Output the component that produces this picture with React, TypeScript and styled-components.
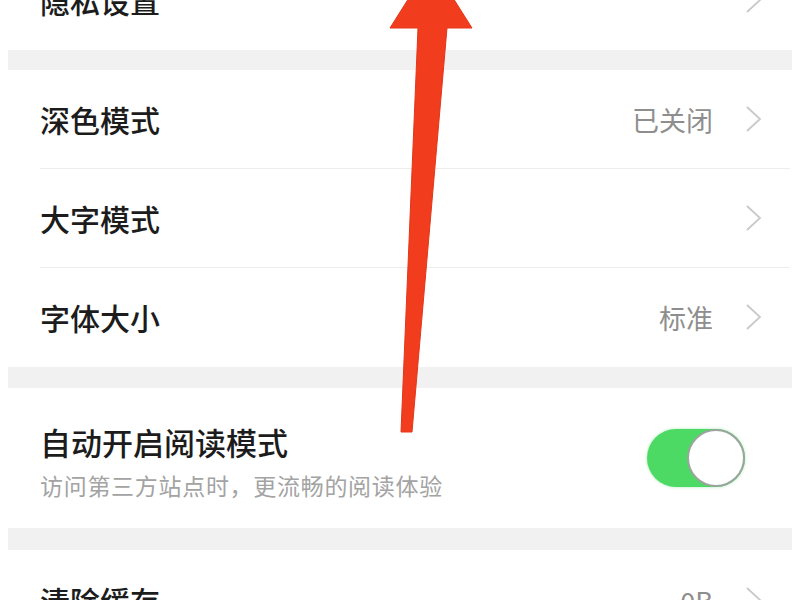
import { FC } from "react";
import styled, { createGlobalStyle } from "styled-components";

const GlobalStyle = createGlobalStyle`
  html, body {
    margin: 0;
    padding: 0;
    background: #fff;
  }
  body {
    font-family: "Noto Sans CJK SC", "Noto Sans", sans-serif;
  }
`;

const Page = styled.div`
  position: relative;
  width: 800px;
  height: 600px;
  overflow: hidden;
  background: #fff;
`;

const List = styled.div`
  display: flex;
  flex-direction: column;
  margin-top: -50px;
`;

const Row = styled.div<{ $h?: number; $pr?: number }>`
  display: flex;
  align-items: center;
  justify-content: space-between;
  height: ${(p) => p.$h ?? 98}px;
  padding: 0 ${(p) => p.$pr ?? 38}px 0 40px;
  flex-shrink: 0;
`;

const Divider = styled.div<{ $blank?: boolean }>`
  height: 1px;
  margin: 0 10px 0 40px;
  background: ${(p) => (p.$blank ? "transparent" : "#ededed")};
  flex-shrink: 0;
`;

const Band = styled.div<{ $h?: number }>`
  height: ${(p) => p.$h ?? 21}px;
  margin: 0 8px;
  background: #f1f1f1;
  flex-shrink: 0;
`;

const Title = styled.div<{ $size?: number }>`
  font-size: ${(p) => p.$size ?? 30}px;
  line-height: 36px;
  color: #1c1c1c;
  font-weight: 500;
`;

const Sub = styled.div`
  font-size: 23px;
  letter-spacing: 0.7px;
  line-height: 30px;
  color: #a3a3a3;
  margin-top: 10px;
`;

const TextBlock = styled.div`
  display: flex;
  flex-direction: column;
  margin-top: 8px;
`;

const Right = styled.div`
  display: flex;
  align-items: center;
  gap: 32px;
`;

const Value = styled.span`
  font-size: 27px;
  color: #8e8e8e;
`;

const Chevron = styled.svg`
  width: 17px;
  height: 28px;
  display: block;
`;

const Toggle = styled.div<{ $on: boolean }>`
  position: relative;
  width: 98px;
  height: 58px;
  border-radius: 29px;
  background: ${(p) => (p.$on ? "#4cd964" : "#e5e5e5")};
  box-shadow: 0 0 3px rgba(76, 217, 100, 0.5);
`;

const Knob = styled.div<{ $on: boolean }>`
  position: absolute;
  top: 0;
  ${(p) => (p.$on ? "right: 0;" : "left: 0;")}
  width: 58px;
  height: 58px;
  box-sizing: border-box;
  border-radius: 50%;
  background: #fff;
  border: 2px solid #9aa59d;
`;

const ArrowLayer = styled.svg`
  position: absolute;
  top: 0;
  left: 0;
  width: 800px;
  height: 600px;
  pointer-events: none;
`;

const ChevronIcon: FC = () => (
  <Chevron viewBox="0 0 17 28">
    <path d="M2 2 L15 14 L2 26" fill="none" stroke="#c9c9c9" strokeWidth="1.8" />
  </Chevron>
);

type Item = { title: string; value?: string };

const NavRow: FC<Item & { h?: number }> = ({ title, value, h }) => (
  <Row $h={h}>
    <Title>{title}</Title>
    <Right>
      {value && <Value>{value}</Value>}
      <ChevronIcon />
    </Right>
  </Row>
);

const displayItems: Item[] = [
  { title: "深色模式", value: "已关闭" },
  { title: "大字模式" },
  { title: "字体大小", value: "标准" },
];

const App: FC = () => {
  return (
    <Page>
      <GlobalStyle />
      <List>
        <NavRow title="隐私设置" h={100} />
        <Band $h={20} />
        {displayItems.map((item, i) => (
          <div key={item.title}>
            <NavRow {...item} />
            <Divider $blank={i === displayItems.length - 1} />
          </div>
        ))}
        <Band />
        <Row $h={140} $pr={55}>
          <TextBlock>
            <Title $size={31}>自动开启阅读模式</Title>
            <Sub>访问第三方站点时，更流畅的阅读体验</Sub>
          </TextBlock>
          <Toggle $on>
            <Knob $on />
          </Toggle>
        </Row>
        <Band $h={22} />
        <NavRow title="清除缓存" value="0B" h={100} />
      </List>
      <ArrowLayer viewBox="0 0 800 600">
        <polygon
          points="431,-37 472,28 447,28 412,432 401,432 418,28 390,28"
          fill="#f23c1e"
          stroke="#e2361a"
          strokeWidth="1"
        />
      </ArrowLayer>
    </Page>
  );
};

export default App;
